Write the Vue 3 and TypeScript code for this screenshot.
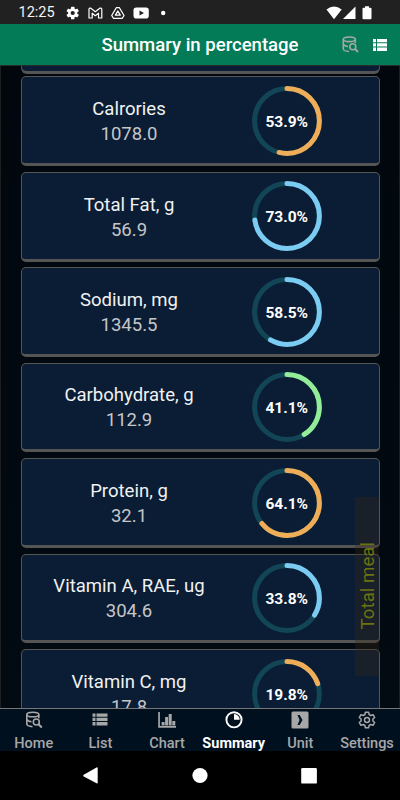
<script setup lang="ts">
interface Nutrient {
  name: string
  amount: string
  percent: number
  color: string
}

const nutrients: Nutrient[] = [
  { name: 'Calrories', amount: '1078.0', percent: 53.9, color: '#f0ad58' },
  { name: 'Total Fat, g', amount: '56.9', percent: 73.0, color: '#7bcbf2' },
  { name: 'Sodium, mg', amount: '1345.5', percent: 58.5, color: '#7bcbf2' },
  { name: 'Carbohydrate, g', amount: '112.9', percent: 41.1, color: '#93ec97' },
  { name: 'Protein, g', amount: '32.1', percent: 64.1, color: '#f0ad58' },
  { name: 'Vitamin A, RAE, ug', amount: '304.6', percent: 33.8, color: '#7bcbf2' },
  { name: 'Vitamin C, mg', amount: '17.8', percent: 19.8, color: '#f0ad58' },
]

const tabs = ['Home', 'List', 'Chart', 'Summary', 'Unit', 'Settings']
const active = 'Summary'
</script>

<template>
  <div class="screen">
    <div class="status">
      <span class="clock">12:25</span>
      <svg class="status-left" width="106" height="16" viewBox="0 0 106 16">
        <g fill="#fff">
          <g transform="translate(6.7 8)">
            <circle r="4.7" />
            <rect v-for="a in [0, 60, 120]" :key="a" x="-1.7" y="-6.3" width="3.4" height="12.6" rx=".6" :transform="`rotate(${a})`" />
            <circle r="2.1" fill="#212121" />
          </g>
          <path d="M23 13V4.4Q23 2.9 24.5 3L29.300 6.700L34.100 3Q35.800 2.900 35.800 4.400V13H32.500V8.200L29.300 10.700L26.200 8.200V13Z" fill="none" stroke="#fff" stroke-width="1.2" stroke-linejoin="round" />
          <path d="M50.300 2.700H53.400L58 10.500L56.300 13.300H47.400L45.700 10.500Z" fill="none" stroke="#fff" stroke-width="1.25" stroke-linejoin="round" />
          <path d="M51.850 6L54.300 10.200H49.400Z" fill="none" stroke="#fff" stroke-width="1.3" stroke-linejoin="round" />
          <rect x="67.500" y="2.500" width="15.300" height="11" rx="2.800" />
          <path d="M73.500 5.500L78 8L73.500 10.500Z" fill="#212121" />
          <circle cx="97.200" cy="8" r="2.200" />
        </g>
      </svg>
      <svg class="status-right" width="48" height="16" viewBox="0 0 48 16" fill="#fff">
        <path d="M.5 4.400Q8 -1.500 15.700 4.400L8 14.200Z" />
        <path d="M29.500 1.500V14H17Z" />
        <path d="M39 1.300H43V2.700H44.500Q45.500 2.700 45.500 3.700V13.200Q45.500 14.200 44.500 14.200H37.500Q36.500 14.200 36.500 13.200V3.700Q36.500 2.700 37.500 2.700H39Z" />
      </svg>
    </div>

    <header class="header">
      <h1>Summary in percentage</h1>
      <div class="actions">
        <svg class="search" width="17" height="17" viewBox="0 0 17 17" fill="none" stroke="#a3a9a4" stroke-width="1.6">
          <ellipse cx="7.300" cy="3.300" rx="6" ry="2.300" />
          <path d="M1.300 3.300V13Q1.600 15 7 15.500M13.300 3.300V7M1.300 8Q2 10 6 10.500" />
          <circle cx="10.800" cy="10.800" r="3" /><path d="M13 13L16 16" stroke-width="2" />
        </svg>
        <svg class="rows" width="14" height="12" viewBox="0 0 14 12" fill="#fff">
          <path d="M0 0h3v3.300H0zM4 0h10v3.300H4zM0 4.300h3v3.300H0zM4 4.300h10v3.300H4zM0 8.600h3V12H0zM4 8.600h10V12H4z" />
        </svg>
      </div>
    </header>

    <main class="content">
      <div class="previous"></div>
      <section v-for="n in nutrients" :key="n.name" class="card">
        <div class="info">
          <div class="name">{{ n.name }}</div>
          <div class="amount">{{ n.amount }}</div>
        </div>
        <svg class="ring" width="70" height="70" viewBox="0 0 70 70">
          <circle cx="35" cy="35" r="32.400" fill="none" stroke="#124656" stroke-width="5" />
          <circle
            cx="35" cy="35" r="32.400" fill="none" stroke-width="5" stroke-linecap="round"
            :stroke="n.color" pathLength="100" :stroke-dasharray="`${n.percent} 100`" transform="rotate(-90 35 35)"
          />
          <text x="34.700" y="40.600" text-anchor="middle">{{ n.percent.toFixed(1) }}%</text>
        </svg>
      </section>
      <div class="meal"><span>Total meal</span></div>
    </main>

    <nav class="tabs">
      <div v-for="t in tabs" :key="t" class="tab" :class="{ active: t === active }">
        <svg v-if="t === 'Home'" width="18" height="18" viewBox="0 0 18 18" fill="none" stroke="currentColor" stroke-width="1.600">
          <ellipse cx="7.800" cy="3.500" rx="6" ry="2.300" />
          <path d="M1.800 3.500V13.200Q2.100 15.200 7.500 15.700M13.800 3.500V7.200M1.800 8.200Q2.500 10.200 6.500 10.700" />
          <circle cx="11.300" cy="11" r="3" /><path d="M13.500 13.200L16.800 16.500" stroke-width="2" />
        </svg>
        <svg v-else-if="t === 'List'" width="18" height="18" viewBox="0 0 18 18" fill="currentColor">
          <path d="M1.500 2.500h3v3.300h-3zM5.500 2.500h11v3.300h-11zM1.500 6.800h3v3.300h-3zM5.500 6.800h11v3.300h-11zM1.500 11.100h3v3.400h-3zM5.500 11.100h11v3.400h-11z" />
        </svg>
        <svg v-else-if="t === 'Chart'" width="18" height="18" viewBox="0 0 18 18" fill="currentColor">
          <path d="M.2 1h1.700v14H18v1.700H.2zM3.600 11h3v3.500h-3zM7.100 6h3v8.500h-3zM10.700 3h3v11.500h-3zM14.300 10h3v4.500h-3z" />
        </svg>
        <svg v-else-if="t === 'Summary'" width="18" height="18" viewBox="0 0 18 18">
          <circle cx="9" cy="8.800" r="7.600" fill="none" stroke="currentColor" stroke-width="1.900" />
          <path d="M9 3V8.800H14.700A5.800 5.800 0 0 0 9 3Z" fill="currentColor" />
        </svg>
        <svg v-else-if="t === 'Unit'" width="18" height="18" viewBox="0 0 18 18">
          <rect x=".5" y=".5" width="17" height="17" rx="1.500" fill="currentColor" />
          <path d="M6.500 4H8.600L11.500 9L8.600 14H6.500L8.600 9Z" fill="#01101f" />
        </svg>
        <svg v-else width="18" height="18" viewBox="0 0 18 18" fill="none" stroke="currentColor" stroke-width="1.500" stroke-linejoin="round">
          <path d="M7.400 1.200h3.200l.5 2.300 1.700 1 2.300-.8 1.600 2.800-1.800 1.500v2l1.800 1.500-1.600 2.800-2.300-.8-1.700 1-.5 2.300H7.400l-.5-2.300-1.700-1-2.300.8-1.600-2.800L3.100 10V8L1.300 6.500l1.600-2.800 2.300.8 1.700-1z" />
          <circle cx="9" cy="9" r="2.500" />
        </svg>
        <span>{{ t }}</span>
      </div>
    </nav>

    <div class="system">
      <svg width="400" height="49" viewBox="0 0 400 49" fill="#fff">
        <path d="M83.300 24L96.500 16.400Q97.700 16 97.700 17.200V31.500Q97.700 32.800 96.500 32.300L83.300 25.200Z" />
        <circle cx="200" cy="24.500" r="7.600" />
        <rect x="301.200" y="17" width="15.700" height="15.600" rx="1.200" />
      </svg>
    </div>
  </div>
</template>

<style>
body {
  margin: 0;
  background: #000;
}
</style>

<style scoped>
.screen {
  width: 400px;
  height: 800px;
  display: flex;
  flex-direction: column;
  overflow: hidden;
  background: #000;
  color: #fff;
  font-family: Roboto, sans-serif;
}
.status {
  height: 24px;
  flex: none;
  display: flex;
  align-items: center;
  background: #212121;
  box-sizing: border-box;
  padding: 1px 26px 0 18.500px;
}
.clock {
  width: 47px;
  font-size: 14.500px;
  color: #f4f4f4;
}
.status-right {
  margin-left: auto;
}
.header {
  height: 41px;
  flex: none;
  display: grid;
  grid-template-columns: 1fr auto 1fr;
  align-items: center;
  background: #027b56;
  border-bottom: 1px solid #2b2b2b;
}
h1 {
  grid-column: 2;
  margin: 1px 0 0;
  font-size: 18.550px;
  line-height: 24px;
  font-weight: 500;
  white-space: nowrap;
}
.actions {
  display: flex;
  justify-content: flex-end;
  align-items: center;
  gap: 14px;
  padding-right: 13px;
}
.content {
  position: relative;
  flex: 1;
  min-height: 0;
  box-sizing: border-box;
  overflow: hidden;
  padding: 0 19px 0 20px;
  background: linear-gradient(#01070d, #020a12);
  border: solid #1c1e20;
  border-width: 0 1px;
}
.previous {
  height: 4.700px;
  margin-bottom: 2.800px;
  border: solid #555;
  border-width: 0 1px 3px;
  border-radius: 0 0 6px 6px;
  background: #0a1d34;
}
.card {
  height: 89.700px;
  margin-bottom: 5.750px;
  box-sizing: border-box;
  display: flex;
  border: solid #555;
  border-width: 1px 1px 3px;
  border-radius: 5px;
  background: #0a1d34;
}
.info {
  width: 214px;
  padding-top: 19.600px;
  text-align: center;
  font-size: 18.550px;
  line-height: 25px;
}
.name {
  color: #f1f1f1;
}
.amount {
  color: #c6c6c8;
}
.ring {
  margin: 8.500px 0 0 16px;
}
.ring text {
  fill: #fff;
  font-size: 15.500px;
  font-weight: 700;
}
.meal {
  position: absolute;
  left: 353.700px;
  top: 431px;
  width: 24.500px;
  height: 179px;
  display: flex;
  align-items: center;
  justify-content: center;
  background: rgba(60, 40, 22, 0.32);
}
.meal span {
  writing-mode: vertical-rl;
  transform: rotate(180deg);
  margin: 0 -2px 2px 0;
  font-size: 18.700px;
  line-height: 24px;
  color: #6b7311;
}
.tabs {
  height: 43px;
  box-sizing: border-box;
  flex: none;
  display: grid;
  grid-template-columns: repeat(6, 66.667px);
  border-top: 1px solid #777;
  background: #01101f;
}
.tab {
  display: flex;
  flex-direction: column;
  align-items: center;
  padding: 2px 0 0 .800px;
  color: #a7a7a7;
  font-size: 14.500px;
  line-height: 18px;
  font-weight: 500;
}
.tab svg {
  flex: none;
}
.tab span {
  margin-top: 6px;
  white-space: nowrap;
}
.tab.active {
  color: #fff;
  font-weight: 700;
}
.system {
  height: 49px;
  flex: none;
}
.system svg {
  display: block;
}
</style>
